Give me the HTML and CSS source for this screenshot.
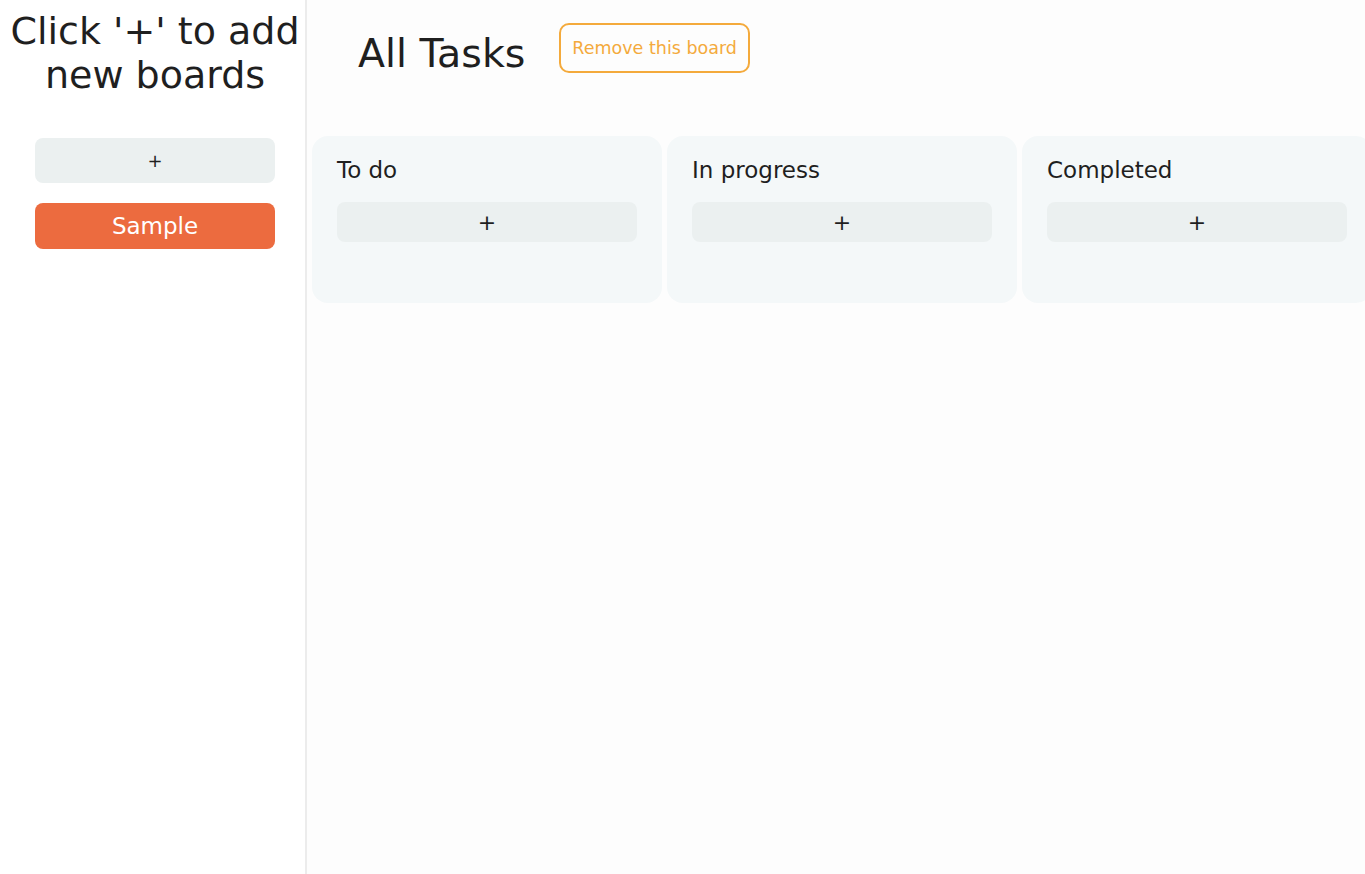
FILE: index.html
```html
<!DOCTYPE html>
<html lang="en">
<head>
<meta charset="utf-8">
<title>Boards</title>
<link rel="stylesheet" href="styles.css">
</head>
<body>
<div class="app">
  <aside class="sidebar">
    <h1 class="sidebar-title">Click '+' to add new boards</h1>
    <div class="board-list">
      <button class="btn-add-board">+</button>
      <button class="btn-board active">Sample</button>
    </div>
  </aside>
  <main class="main">
    <header class="board-header">
      <h2 class="board-title">All Tasks</h2>
      <button class="btn-remove">Remove this board</button>
    </header>
    <section class="columns">
      <div class="column">
        <h3 class="column-title">To do</h3>
        <button class="btn-add-task">+</button>
      </div>
      <div class="column">
        <h3 class="column-title">In progress</h3>
        <button class="btn-add-task">+</button>
      </div>
      <div class="column">
        <h3 class="column-title">Completed</h3>
        <button class="btn-add-task">+</button>
      </div>
    </section>
  </main>
</div>
</body>
</html>
```
FILE: styles.css
```css
* { box-sizing: border-box; }
html, body { margin: 0; padding: 0; height: 100%; }
body {
  font-family: "DejaVu Sans", "Open Sans", sans-serif;
  color: #1f1f1f;
  background: #fdfdfd;
  overflow: hidden;
}
button { font-family: inherit; cursor: pointer; }
.app { display: flex; height: 100vh; }
.sidebar {
  width: 307px;
  flex-shrink: 0;
  background: #ffffff;
  border-right: 2px solid #ececec;
  padding: 9px 0 0 5px;
}
.sidebar-title {
  margin: 0;
  font-size: 38px;
  font-weight: 400;
  line-height: 44px;
  text-align: center;
}
.board-list {
  display: flex;
  flex-direction: column;
  align-items: center;
  gap: 20px;
  margin-top: 41px;
}
.btn-add-board, .btn-board {
  width: 240px;
  border: none;
  border-radius: 8px;
}
.btn-add-board {
  height: 45px;
  background: #ebf0f0;
  color: #1f1f1f;
  font-size: 18px;
}
.btn-board {
  height: 46px;
  background: #ec6b3f;
  color: #ffffff;
  font-size: 23px;
}
.main { flex: 1; min-width: 0; overflow: hidden; padding-left: 5px; }
.board-header {
  display: flex;
  gap: 34px;
  padding: 23px 0 0 46px;
  height: 136px;
  align-items: flex-start;
}
.board-title {
  margin: 0;
  font-size: 39.5px;
  font-weight: 400;
  line-height: 50px;
  padding-top: 5px;
}
.btn-remove {
  height: 50px;
  padding: 0 11px;
  background: transparent;
  border: 2px solid #f4aa3c;
  border-radius: 10px;
  color: #f4aa3c;
  font-size: 17.5px;
}
.columns { display: flex; gap: 5px; }
.column {
  width: 350px;
  height: 167px;
  flex-shrink: 0;
  background: #f4f8f9;
  border-radius: 16px;
  padding: 20px 25px;
}
.column-title {
  margin: 0;
  font-size: 23px;
  font-weight: 400;
  line-height: 28px;
}
.btn-add-task {
  display: block;
  width: 300px;
  height: 40px;
  margin-top: 18px;
  background: #ebf0f0;
  border: none;
  border-radius: 8px;
  color: #1f1f1f;
  font-size: 22px;
}
```
